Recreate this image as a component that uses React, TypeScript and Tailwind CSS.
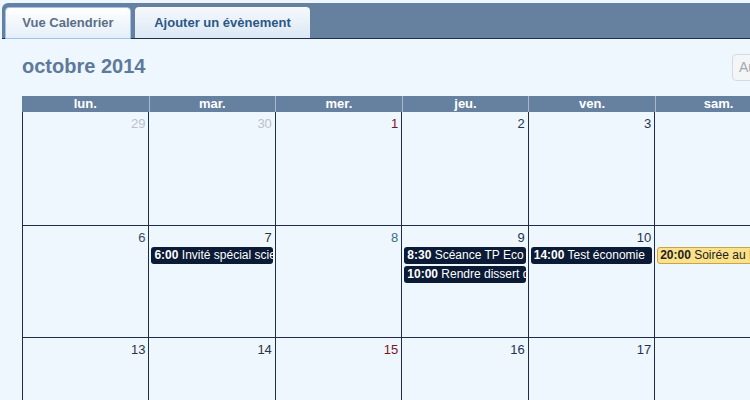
const font = { fontFamily: '"Liberation Sans", Arial, sans-serif' };

const days = ["lun.", "mar.", "mer.", "jeu.", "ven.", "sam.", "dim."];

type Ev = { time: string; label: string; tone?: "dark" | "yellow" };
type Cell = { n: number; color: string; events?: Ev[] };

const weeks: Cell[][] = [
  [
    { n: 29, color: "text-[#b9c2cc]" },
    { n: 30, color: "text-[#b9c2cc]" },
    { n: 1, color: "text-[#7c1422]" },
    { n: 2, color: "text-[#1f3550]" },
    { n: 3, color: "text-[#1f3550]" },
    { n: 4, color: "text-[#1f3550]" },
    { n: 5, color: "text-[#1f3550]" },
  ],
  [
    { n: 6, color: "text-[#3c4e63]" },
    { n: 7, color: "text-[#2a3442]", events: [{ time: "6:00", label: "Invité spécial science" }] },
    { n: 8, color: "text-[#3a6d8e]" },
    {
      n: 9,
      color: "text-[#1f3550]",
      events: [
        { time: "8:30", label: "Scéance TP Eco" },
        { time: "10:00", label: "Rendre dissert d'éco" },
      ],
    },
    { n: 10, color: "text-[#1f3550]", events: [{ time: "14:00", label: "Test économie" }] },
    { n: 11, color: "text-[#1f3550]", events: [{ time: "20:00", label: "Soirée au BDE", tone: "yellow" }] },
    { n: 12, color: "text-[#1f3550]" },
  ],
  [
    { n: 13, color: "text-[#2a3442]" },
    { n: 14, color: "text-[#2a3442]" },
    { n: 15, color: "text-[#7c1422]" },
    { n: 16, color: "text-[#1f3550]" },
    { n: 17, color: "text-[#1f3550]" },
    { n: 18, color: "text-[#1f3550]" },
    { n: 19, color: "text-[#1f3550]" },
  ],
];

export default function App() {
  return (
    <div className="w-[750px] h-[400px] overflow-hidden bg-[#eef6fe]" style={font}>
      {/* tab bar */}
      <div className="pt-[3px] pl-[2px] w-[760px]">
        <div className="h-[36px] bg-[#6681a0] rounded-tl-[6px] border-b border-[#1e2f47] flex items-end gap-[4px] pl-[3px]">
          <div className="h-[32px] w-[126px] -mb-px rounded-t-[4px] border border-[#9cc4ee] bg-gradient-to-b from-white to-[#e4eef9] flex items-center justify-center text-[13px] font-bold text-[#5b6f88]">
            Vue Calendrier
          </div>
          <div className="h-[31px] w-[175px] rounded-t-[4px] bg-gradient-to-b from-[#f6f9fd] to-[#dbe8f5] flex items-center justify-center text-[13px] font-bold text-[#2c5786]">
            Ajouter un évènement
          </div>
        </div>
      </div>

      {/* title row */}
      <div className="flex items-center pl-[22px] mt-[15px] h-[26px]">
        <h1 className="w-[710px] shrink-0 text-[20px] font-bold text-[#5d7a9b] leading-[24px] -mt-[3px]">octobre 2014</h1>
        <div className="h-[27px] px-[6px] rounded-[4px] border border-[#d6dbe1] bg-[#f3f5f7] text-[14px] text-[#a4a9ae] flex items-center">
          Aujourd'hui
        </div>
      </div>

      {/* calendar */}
      <div className="ml-[22px] mt-[16px] w-[886px]">
        <div className="grid grid-cols-7 bg-[#6681a0] h-[16px]">
          {days.map((d, i) => (
            <div
              key={d}
              className={`${i > 0 ? "border-l border-[#aab8c8]" : ""} text-center text-white font-bold text-[13px] leading-[16px]`}
            >
              {d}
            </div>
          ))}
        </div>
        <div className="border-r border-[#1c2d45]">
          {weeks.map((w, i) => (
            <div key={i} className={`grid grid-cols-7 ${i === 0 ? "h-[114px]" : "h-[112px]"} border-b border-[#1c2d45]`}>
              {w.map((c) => (
                <div key={c.n} className="border-l border-[#1c2d45] min-w-0">
                  <div className={`text-right pr-[3px] pt-[4px] text-[13px] leading-[15px] ${c.color}`}>{c.n}</div>
                  <div className="mt-[2px] flex flex-col gap-[2px] pl-[2px] pr-[2px]">
                    {c.events?.map((e) => (
                      <div
                        key={e.time}
                        className={
                          e.tone === "yellow"
                            ? "h-[17px] rounded-[3px] border border-[#c7a64a] bg-[#fbe18a] text-[#222] text-[12px] leading-[15px] px-[2px] whitespace-nowrap overflow-hidden"
                            : "h-[17px] rounded-[3px] bg-[#0b1b35] text-white text-[12px] leading-[17px] px-[3px] whitespace-nowrap overflow-hidden"
                        }
                      >
                        <span className="font-bold">{e.time}</span> {e.label}
                      </div>
                    ))}
                  </div>
                </div>
              ))}
            </div>
          ))}
        </div>
      </div>
    </div>
  );
}
